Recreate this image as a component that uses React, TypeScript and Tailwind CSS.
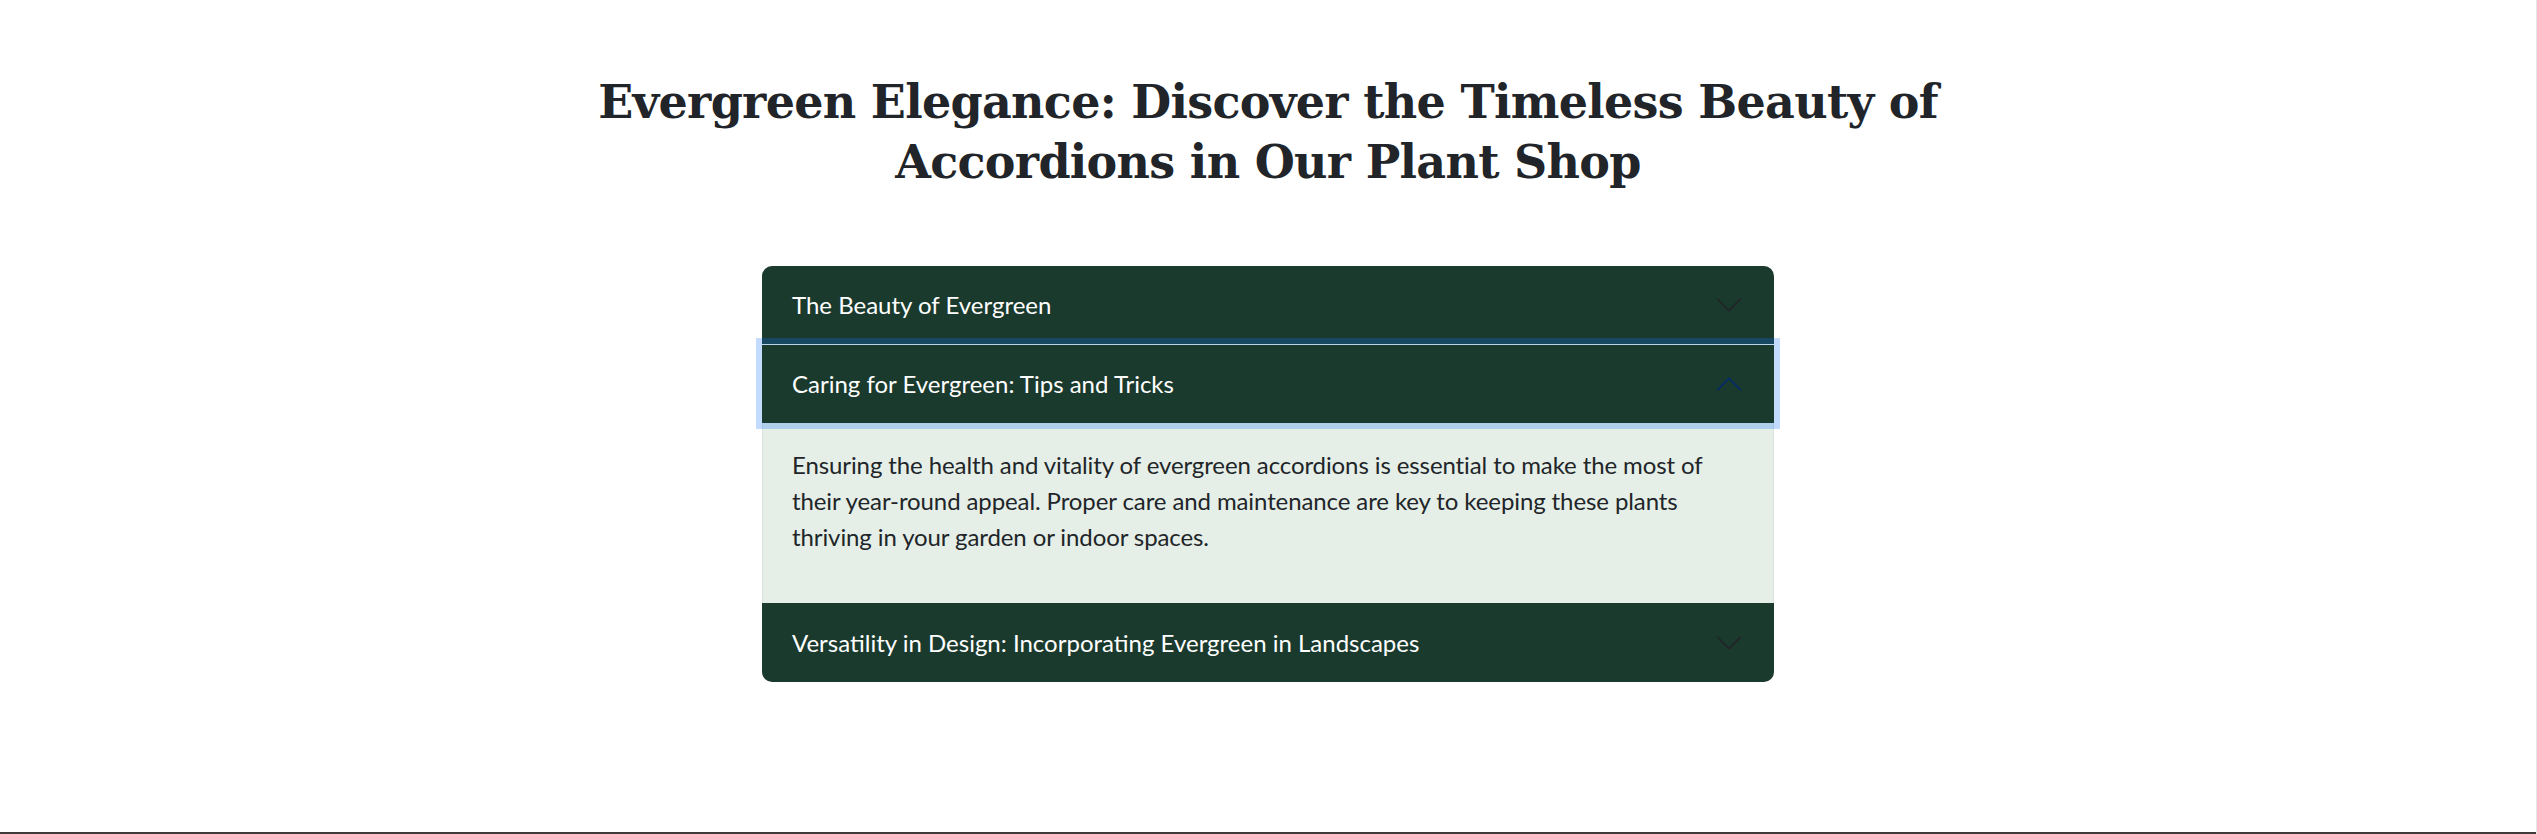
import { useState } from "react";

const items = [
  {
    title: "The Beauty of Evergreen",
    body: "Evergreen accordions bring lasting color and structure to any space, keeping their lush foliage through every season.",
  },
  {
    title: "Caring for Evergreen: Tips and Tricks",
    body: "Ensuring the health and vitality of evergreen accordions is essential to make the most of their year-round appeal. Proper care and maintenance are key to keeping these plants thriving in your garden or indoor spaces.",
  },
  {
    title: "Versatility in Design: Incorporating Evergreen in Landscapes",
    body: "From hedges to containers, evergreens fit naturally into formal and relaxed landscape designs alike.",
  },
];

function Chevron({ open }: { open: boolean }) {
  return (
    <svg
      viewBox="0 0 16 16"
      className={open ? "w-[30px] h-[30px] rotate-180" : "w-[30px] h-[30px]"}
      fill="none"
      stroke={open ? "#052c65" : "#212529"}
      strokeLinecap="round"
      strokeLinejoin="round"
      strokeWidth={1}
    >
      <path d="M2 5L8 11L14 5" />
    </svg>
  );
}

export default function App() {
  const [openIndex, setOpenIndex] = useState(1);

  return (
    <div className="min-h-[834px] flex flex-col bg-white border-r border-[#e6e6e6]">
      <main className="flex-1 pt-[72px]">
        <h1 className="text-center font-['DejaVu_Serif',serif] font-bold text-[46px] leading-[60px] text-[#212529] tracking-[-0.7px]">
          Evergreen Elegance: Discover the Timeless Beauty of
          <br />
          Accordions in Our Plant Shop
        </h1>

        {/* Accordion */}
        <div className="w-[1012px] mx-auto mt-[74px] font-['Lato',sans-serif]">
          {items.map((item, i) => {
            const open = openIndex === i;
            const first = i === 0;
            const last = i === items.length - 1;
            return (
              <div key={item.title}>
                <button
                  type="button"
                  onClick={() => setOpenIndex(open ? -1 : i)}
                  className={[
                    "w-full flex items-center justify-between px-[30px] text-left text-[24px] text-white bg-[#1b3a2e]",
                    first ? "h-[78px] rounded-t-[10px]" : "h-[79px]",
                    last && !open ? "rounded-b-[10px]" : "",
                    open
                      ? "relative z-10 border-t border-[#bcd3ee] shadow-[0_0_0_6px_rgba(13,110,253,0.25)]"
                      : "",
                  ].join(" ")}
                >
                  <span>{item.title}</span>
                  <Chevron open={open} />
                </button>
                {open && (
                  <div className="h-[180px] bg-[#e5efe7] border-x border-[#d9e3dc] px-[29px] pt-[24px]">
                    <p className="text-[24px] leading-[36px] text-[#212529] tracking-[-0.1px]">
                      {item.body}
                    </p>
                  </div>
                )}
              </div>
            );
          })}
        </div>
      </main>
      <div className="h-[2px] bg-[#3d3a37]" />
    </div>
  );
}
